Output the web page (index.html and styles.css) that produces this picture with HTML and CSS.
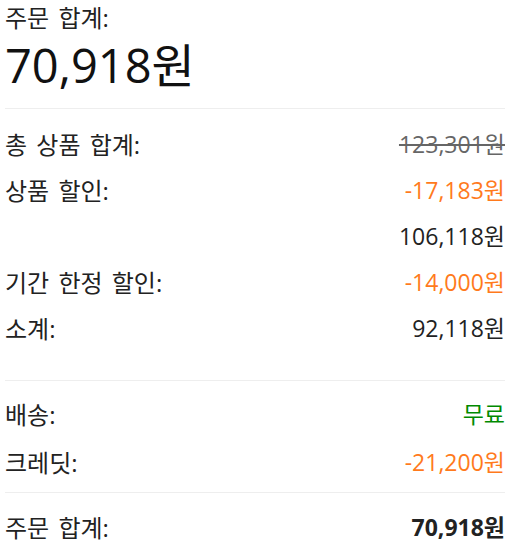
FILE: index.html
```html
<!DOCTYPE html>
<html lang="ko">
<head>
    <meta charset="UTF-8">
    <meta name="viewport" content="width=device-width, initial-scale=1.0">
    <title>주문 요약</title>
    <link rel="stylesheet" href="styles.css">
</head>
<body>
    <div class="summary">
        <div class="total-head">
            <div class="total-label">주문 합계:</div>
            <div class="total-amount">70,918원</div>
        </div>

        <div class="section items">
            <div class="row">
                <span class="label">총 상품 합계:</span>
                <span class="strike">123,301원</span>
            </div>
            <div class="row">
                <span class="label">상품 할인:</span>
                <span class="discount">-17,183원</span>
            </div>
            <div class="row">
                <span class="label"></span>
                <span>106,118원</span>
            </div>
            <div class="row">
                <span class="label">기간 한정 할인:</span>
                <span class="discount">-14,000원</span>
            </div>
            <div class="row">
                <span class="label">소계:</span>
                <span>92,118원</span>
            </div>
        </div>

        <div class="section extras">
            <div class="row">
                <span class="label">배송:</span>
                <span class="free">무료</span>
            </div>
            <div class="row">
                <span class="label">크레딧:</span>
                <span class="discount">-21,200원</span>
            </div>
        </div>

        <div class="row final">
            <span class="label">주문 합계:</span>
            <strong>70,918원</strong>
        </div>
    </div>
</body>
</html>
```

FILE: styles.css
```css
body {
    margin: 0;
    padding: 0 3px 0 5px;
    font-family: "Open Sans", "Noto Sans CJK KR", sans-serif;
    color: #222;
    background: #fff;
}
.summary {
    width: 500px;
}
.total-head {
    padding-bottom: 12px;
    border-bottom: 1px solid #eee;
}
.total-label {
    font-size: 24px;
    line-height: 35px;
    word-spacing: 3px;
}
.total-amount {
    font-size: 47px;
    line-height: 61px;
    color: #111;
}
.section {
    border-bottom: 1px solid #eee;
}
.items {
    padding: 11px 0 30px;
}
.extras {
    padding: 8px 0 7px;
}
.extras .row {
    height: 48px;
}
.row {
    display: flex;
    justify-content: space-between;
    align-items: center;
    font-size: 23px;
    height: 46px;
}
.label {
    font-size: 24px;
    word-spacing: 3px;
}
.strike {
    color: #666;
    text-decoration: line-through;
}
.discount {
    color: #ff7a1c;
}
.free {
    color: #008a00;
}
.final {
    margin-top: 17px;
    height: 35px;
    line-height: 35px;
}
.final strong {
    font-weight: bold;
}
```
